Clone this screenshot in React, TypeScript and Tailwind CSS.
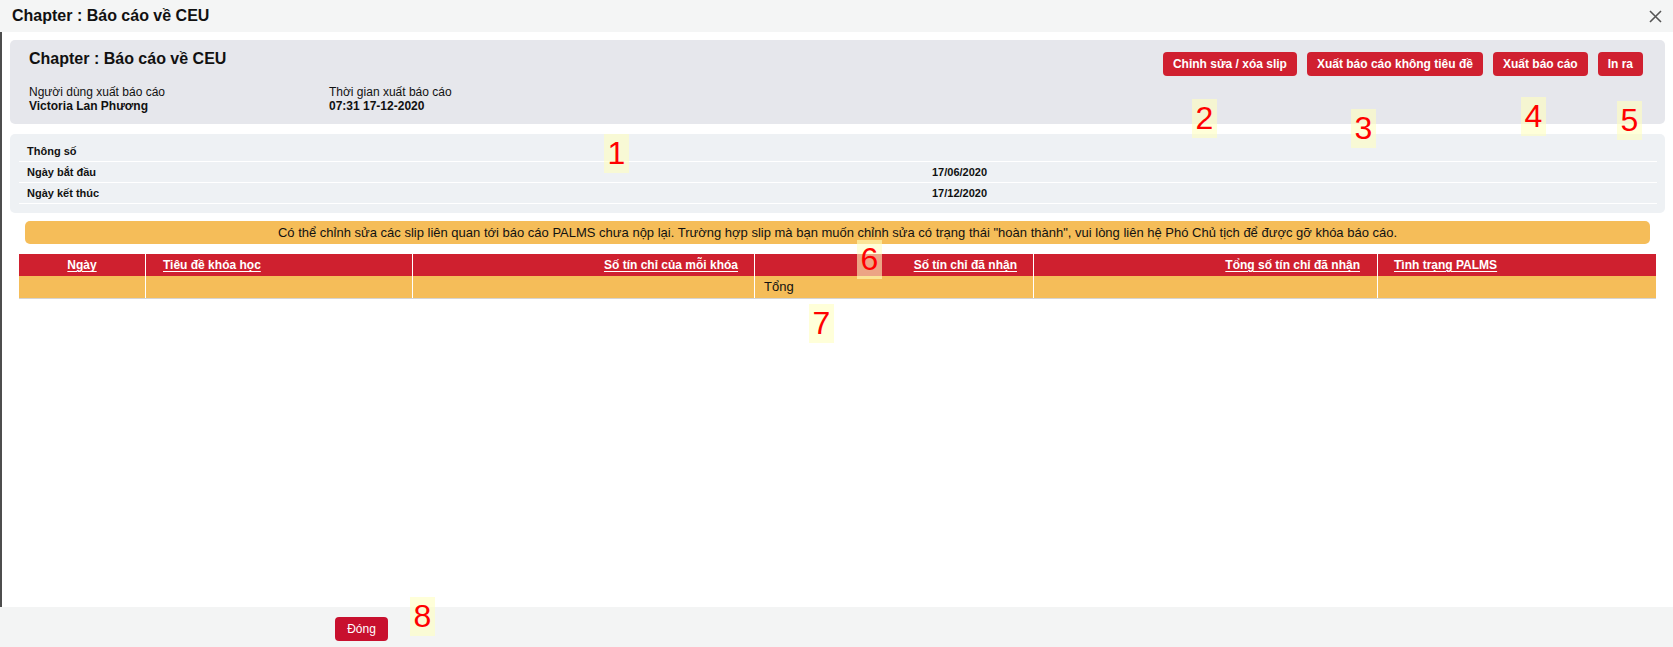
import React from "react";

const font = { fontFamily: '"Liberation Sans", Arial, sans-serif' };

function Marker({ n, x, y }: { n: string; x: number; y: number }) {
  return (
    <div
      className="absolute w-[25px] h-[39px] bg-[#ffffc0]/60 text-[#ff0000] text-[32px] leading-[39px] text-center"
      style={{ left: x, top: y, fontFamily: '"Liberation Sans", Arial, sans-serif' }}
    >
      {n}
    </div>
  );
}

const headers: { label: string; align: string }[] = [
  { label: "Ngày", align: "justify-center" },
  { label: "Tiêu đề khóa học", align: "justify-start pl-[17px]" },
  { label: "Số tín chỉ của mỗi khóa", align: "justify-end pr-[16px]" },
  { label: "Số tín chỉ đã nhận", align: "justify-end pr-[16px]" },
  { label: "Tổng số tín chỉ đã nhận", align: "justify-end pr-[17px]" },
  { label: "Tình trạng PALMS", align: "justify-start pl-[16px]" },
];

export default function App() {
  return (
    <div className="relative w-[1673px] h-[647px] flex flex-col bg-white text-[#111] overflow-hidden" style={font}>
      {/* Title bar */}
      <div className="h-[32px] shrink-0 bg-[#f4f5f5] flex items-center justify-between pl-[12px] pr-[11px]">
        <div className="text-[16px] font-bold leading-[20px] text-[#111]">Chapter : Báo cáo về CEU</div>
        <svg width="13" height="13" viewBox="0 0 13 13" className="mt-[1px]">
          <path d="M1 1 L12 12 M12 1 L1 12" stroke="#555" strokeWidth="1.6" fill="none" />
        </svg>
      </div>

      {/* Body */}
      <div className="flex-1 border-l-2 border-[#4d4d4d] flex flex-col">
        {/* Header panel */}
        <div className="mt-[8px] ml-[8px] mr-[8px] rounded-[5px] bg-[#e6e7ec] pl-[19px] pr-[22px] pt-[9px] pb-[11px] flex justify-between items-start">
          <div>
            <div className="text-[16px] font-bold leading-[20px]">Chapter : Báo cáo về CEU</div>
            <div className="mt-[16px] grid grid-cols-[300px_300px] text-[12px] leading-[14px]">
              <div>
                <div>Người dùng xuất báo cáo</div>
                <div className="font-bold">Victoria Lan Phương</div>
              </div>
              <div>
                <div>Thời gian xuất báo cáo</div>
                <div className="font-bold">07:31 17-12-2020</div>
              </div>
            </div>
          </div>
          <div className="mt-[3px] flex gap-[10px]">
            {["Chỉnh sửa / xóa slip", "Xuất báo cáo không tiêu đề", "Xuất báo cáo", "In ra"].map((b) => (
              <button
                key={b}
                className="h-[24px] px-[10px] rounded-[4px] bg-[#d02030] text-white text-[12px] font-bold leading-[24px] whitespace-nowrap"
              >
                {b}
              </button>
            ))}
          </div>
        </div>

        {/* Params panel */}
        <div className="mt-[10px] ml-[8px] mr-[8px] rounded-[5px] bg-[#eef1f4] pl-[9px] pr-[8px] pt-[7px] pb-[9px]">
          {[
            ["Thông số", ""],
            ["Ngày bắt đầu", "17/06/2020"],
            ["Ngày kết thúc", "17/12/2020"],
          ].map(([l, v]) => (
            <div key={l} className="h-[21px] border-b border-white grid grid-cols-[904px_1fr] text-[11px] font-bold">
              <div className="pl-[8px] flex items-center">{l}</div>
              <div className="pl-[9px] flex items-center">{v}</div>
            </div>
          ))}
        </div>

        {/* Notice */}
        <div className="mt-[8px] ml-[23px] mr-[23px] h-[23px] rounded-[5px] bg-[#f5bd59] text-[13px] leading-[23px] text-center text-[#111]">
          Có thể chỉnh sửa các slip liên quan tới báo cáo PALMS chưa nộp lại. Trường hợp slip mà bạn muốn chỉnh sửa có trạng thái "hoàn thành", vui lòng liên hệ Phó Chủ tịch để được gỡ khóa báo cáo.
        </div>

        {/* Table */}
        <div className="mt-[10px] ml-[17px] mr-[17px]">
          <div className="grid grid-cols-[126px_267px_342px_279px_344px_279px] h-[22px] bg-[#cf202f]">
            {headers.map((h, i) => (
              <div
                key={h.label}
                className={`flex items-center ${h.align} ${i > 0 ? "border-l border-white" : ""} text-white text-[12px] font-bold`}
              >
                <span className="underline underline-offset-2">{h.label}</span>
              </div>
            ))}
          </div>
          <div className="grid grid-cols-[126px_267px_342px_279px_344px_279px] h-[23px] bg-[#f5bd59] border-b border-[#d4d4d4]">
            <div />
            <div className="border-l border-white" />
            <div className="border-l border-white" />
            <div className="border-l border-white pl-[9px] flex items-center text-[13px]">Tổng</div>
            <div className="border-l border-white" />
            <div className="border-l border-white" />
          </div>
        </div>
      </div>

      {/* Footer */}
      <div className="h-[40px] shrink-0 bg-[#f3f4f4] pt-[9px] pl-[335px]">
        <button className="h-[24px] w-[53px] rounded-[4px] bg-[#c8102e] text-white text-[12px] leading-[24px]">Đóng</button>
      </div>

      {/* Annotation markers */}
      <Marker n="1" x={604} y={134} />
      <Marker n="2" x={1192} y={99} />
      <Marker n="3" x={1351} y={109} />
      <Marker n="4" x={1521} y={97} />
      <Marker n="5" x={1617} y={101} />
      <Marker n="6" x={857} y={240} />
      <Marker n="7" x={809} y={304} />
      <Marker n="8" x={410} y={597} />
    </div>
  );
}
